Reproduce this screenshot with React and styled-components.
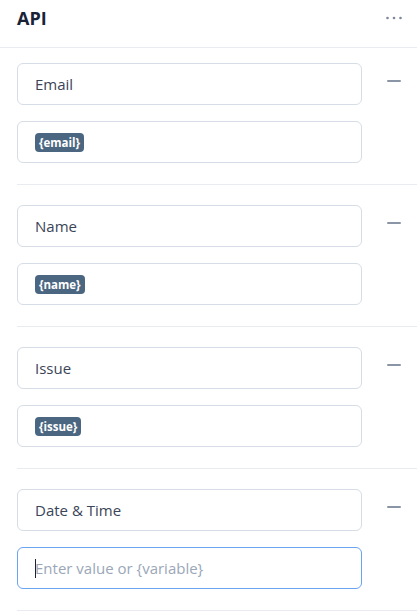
import React from 'react';
import styled, { createGlobalStyle } from 'styled-components';

const GlobalStyle = createGlobalStyle`
  body {
    margin: 0;
    background: #fff;
    font-family: 'Open Sans', 'Noto Sans', sans-serif;
  }
`;

const Panel = styled.div`
  width: 417px;
  background: #fff;
`;

const Header = styled.header`
  height: 48px;
  box-sizing: border-box;
  padding: 8px 7px 0 17px;
  border-bottom: 1px solid #e8ebef;
  display: flex;
  align-items: flex-start;
  justify-content: space-between;
`;

const Title = styled.h1`
  margin: 0;
  font-size: 18px;
  line-height: 20px;
  font-weight: 700;
  color: #1a2236;
`;

const IconButton = styled.button`
  width: 32px;
  height: ${(p) => p.h || 32}px;
  margin-top: ${(p) => p.top || 0}px;
  padding: 0;
  border: 0;
  background: none;
  display: flex;
  align-items: center;
  justify-content: center;
  color: #7d8899;
  cursor: pointer;
  flex-shrink: 0;
`;

const Section = styled.section`
  margin-left: 17px;
  padding: ${(p) => (p.first ? 15 : 20)}px 7px 21px 0;
  border-bottom: 1px solid #e8ebef;
  display: flex;
  gap: 16px;
`;

const Fields = styled.div`
  flex: 1;
  display: flex;
  flex-direction: column;
  gap: 16px;
`;

const Field = styled.div`
  height: 42px;
  box-sizing: border-box;
  border: 1px solid ${(p) => (p.focused ? '#6aa3ef' : '#d6dde6')};
  border-radius: 6px;
  padding: 0 17px;
  display: flex;
  align-items: center;
  font-size: 15px;
  color: #3a4558;
`;

const Caret = styled.span`
  width: 1px;
  height: 19px;
  margin-right: -1px;
  background: #1a2236;
  flex-shrink: 0;
  position: relative;
  z-index: 1;
`;

const Input = styled.input`
  width: 100%;
  border: 0;
  outline: none;
  padding: 0;
  background: none;
  font: inherit;
  color: #3a4558;
  caret-color: transparent;

  &::placeholder {
    color: #9aa7b8;
  }
`;

const Tag = styled.span`
  display: inline-flex;
  align-items: center;
  height: 19px;
  padding: 0 4px;
  border-radius: 4px;
  background: #4b6681;
  color: #fff;
  font-size: 11.5px;
  font-weight: 700;
`;

const Dots = () => (
  <svg width="16" height="4" viewBox="0 0 16 4">
    <circle cx="1.5" cy="2" r="1.3" fill="currentColor" />
    <circle cx="8" cy="2" r="1.3" fill="currentColor" />
    <circle cx="14.5" cy="2" r="1.3" fill="currentColor" />
  </svg>
);

const Minus = () => (
  <svg width="14" height="2" viewBox="0 0 14 2">
    <rect width="14" height="2" rx="1" fill="#8a95a6" />
  </svg>
);

const rows = [
  { key: 'Email', value: '{email}' },
  { key: 'Name', value: '{name}' },
  { key: 'Issue', value: '{issue}' },
  { key: 'Date & Time', value: null },
];

function App() {
  return (
    <Panel>
      <GlobalStyle />
      <Header>
        <Title>API</Title>
        <IconButton h={20} aria-label="More">
          <Dots />
        </IconButton>
      </Header>
      {rows.map((row, i) => (
        <Section key={row.key} first={i === 0}>
          <Fields>
            <Field>{row.key}</Field>
            {row.value ? (
              <Field>
                <Tag>{row.value}</Tag>
              </Field>
            ) : (
              <Field focused>
                <Caret />
                <Input placeholder="Enter value or {variable}" />
              </Field>
            )}
          </Fields>
          <IconButton top={2} aria-label="Remove">
            <Minus />
          </IconButton>
        </Section>
      ))}
    </Panel>
  );
}

export default App;
